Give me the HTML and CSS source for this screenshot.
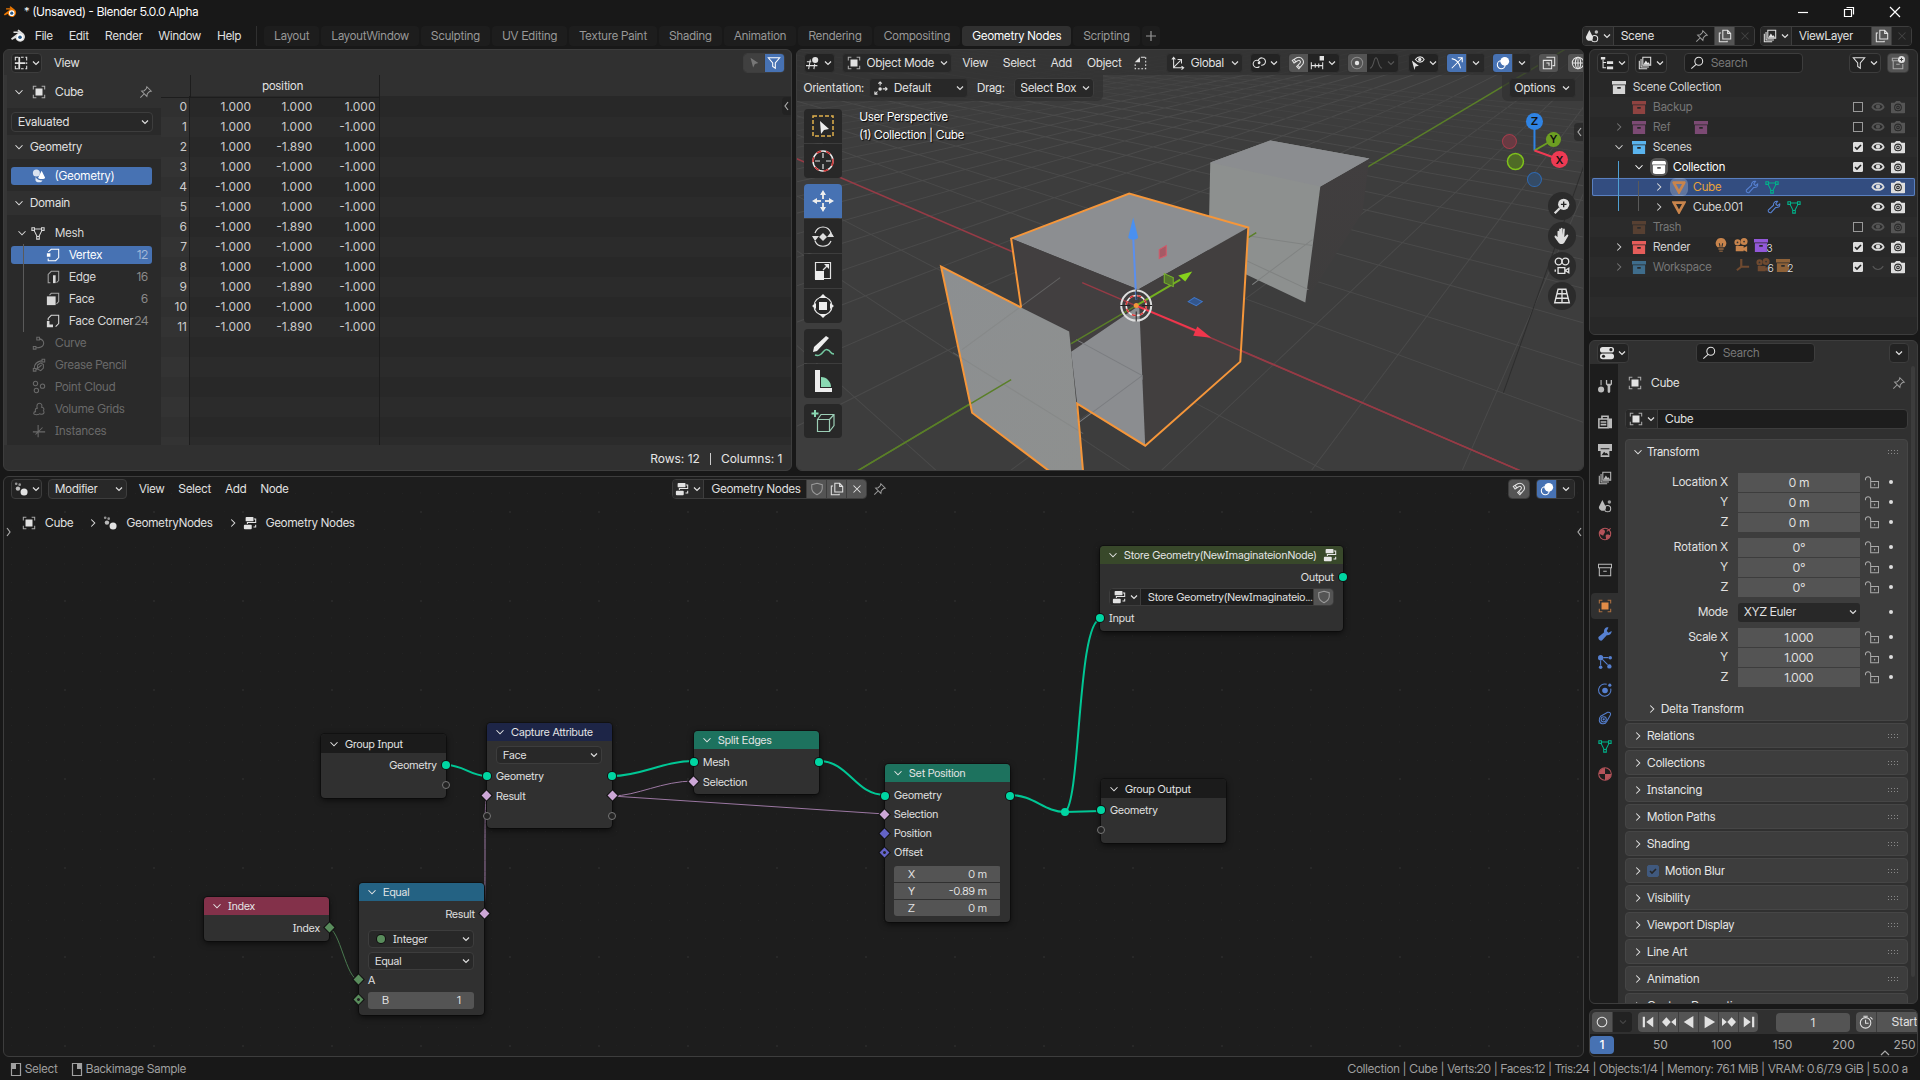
FILE: index.html
```html
<!DOCTYPE html>
<html lang="en">
<head>
<meta charset="utf-8">
<title>* (Unsaved) - Blender 5.0.0 Alpha</title>
<link rel="stylesheet" href="styles.css">
</head>
<body>
<svg class="sprite" aria-hidden="true">
  <symbol id="blender" viewBox="0 0 16 16"><path d="M1 10.500 8 5H3.500V3.600h5.200L7.400 2.400 8.600 1.400l5 4.100a4.800 4.800 0 1 1-8.100 4.500L2 12z" fill="currentColor"/><circle cx="10" cy="9.300" r="3.200" class="hole"/><circle cx="10" cy="9.300" r="1.800" class="pupil"/></symbol>
  <symbol id="sheet" viewBox="0 0 16 16"><path d="M1.500 5V1.500H5M8 1.500h3M14.500 5V1.500H13M1.500 11v3.500H5M8 14.500h3M14.500 11v3.500H13M14.500 7v2" class="l"/><path d="M5 1h2v14H5zM1 7h12v2H1z" fill="currentColor"/></symbol>
  <symbol id="down" viewBox="0 0 8 16"><path d="m1 6.500 3 3 3-3" class="l"/></symbol>
  <symbol id="open" viewBox="0 0 16 16"><path d="m4 6 4 4 4-4" class="l"/></symbol>
  <symbol id="closed" viewBox="0 0 16 16"><path d="m6 4 4 4-4 4" class="l"/></symbol>
  <symbol id="pin" viewBox="0 0 16 16"><path d="m9 2 5 5-2 .5L9.500 10l-.5 3-6-6 3-.5L8.500 4zM6 10l-4.500 4.500" class="l"/></symbol>
  <symbol id="object" viewBox="0 0 16 16"><path d="M1.500 5V1.500H5M11 1.500h3.500V5M1.500 11v3.500H5M11 14.500h3.500V11" class="l" opacity=".7"/><path d="M4 4h8v8H4z" fill="currentColor"/></symbol>
  <symbol id="cursor" viewBox="0 0 16 16"><path d="m4 2 9 6-4 1-2 4z" fill="currentColor"/></symbol>
  <symbol id="funnel" viewBox="0 0 16 16"><path d="M1.500 2h13l-5 6v6l-3-2V8z" class="l"/></symbol>
  <symbol id="geom" viewBox="0 0 16 16"><circle cx="5" cy="4.500" r="4" fill="currentColor" opacity=".8"/><path d="m11 2 4 8c0 2-8 2-8 0z" fill="currentColor"/><path d="M4 9v4c1 3 7 3 8 0-4 0-6-1-8-4z" fill="currentColor" opacity=".85"/></symbol>
  <symbol id="mesh" viewBox="0 0 16 16"><path d="M1 2h3v3H1zM12 2h3v3h-3zM6.500 12h3v3h-3zM4 3.500h8M3.500 5 7 12M12.500 5 9 12" class="l"/></symbol>
  <symbol id="vertex" viewBox="0 0 16 16"><path d="M3 4.500V4l3-2.500h8.500V11L11 14.500H2.500V12" class="l"/><path d="M1 6h4v4H1z" fill="currentColor"/></symbol>
  <symbol id="edge" viewBox="0 0 16 16"><path d="M5 14.500H2.500V5L6 1.500h8.500V12L12 14.500" class="l" opacity=".7"/><path d="M8 6h3v9H8z" fill="currentColor"/></symbol>
  <symbol id="face" viewBox="0 0 16 16"><path d="M4 3.500 6 1.500h8.500V11L12 13.500" class="l" opacity=".7"/><path d="M1 5h10v10H1z" fill="currentColor"/></symbol>
  <symbol id="corner" viewBox="0 0 16 16"><path d="M2.500 7V5L6 1.500h8.500V11L11 14.500" class="l"/><path d="M1 8h3v4h4v3H1z" fill="currentColor"/></symbol>
  <symbol id="curve" viewBox="0 0 16 16"><path d="M5.500 1.500h3v3h-3zM1.500 12h3v3h-3zM8.500 3C13 4 14 8 13 10c-1 2.500-4 3.500-8 3.500" class="l"/></symbol>
  <symbol id="gpencil" viewBox="0 0 16 16"><path d="M11.500 1.500h3v3h-3zM1.500 12h3v3h-3zM2.500 12c0-5 3-8 9-9M6.500 8 10 5.500l3 2v4L10 14.500l-4-2zM4.500 13.500 11 8" class="l"/></symbol>
  <symbol id="points" viewBox="0 0 16 16"><circle cx="4" cy="4" r="2.500" class="l"/><circle cx="12" cy="7" r="2.500" class="l"/><circle cx="5" cy="12" r="2.500" class="l"/></symbol>
  <symbol id="volume" viewBox="0 0 16 16"><path d="M6 7C5 4 6 1.500 8.500 1.500S12 4 11 6c3 0 3 3 2 4 2 2 0 4-2 4-1 0-2 0-2-1-1 2-7 2-7 0s1-2 2-2c-1-3 1-4 2-4z" class="l"/></symbol>
  <symbol id="empty" viewBox="0 0 16 16"><path d="M7 1v14M1 9h14M4 12l8-8" class="l"/></symbol>
  <symbol id="view3d" viewBox="0 0 16 16"><path d="M1 6.500h5M0 11h13M5 4 3 15M10 9 9 15" class="l"/><circle cx="10.500" cy="4.500" r="3.500" fill="currentColor"/></symbol>
  <symbol id="axes" viewBox="0 0 16 16"><path d="M3 14V2M1 4l2-2.500L5 4M3 13.500h11M12 11.500l2.500 2-2.500 2M3 13l8-8M7.500 4H12v4.500" class="l"/></symbol>
  <symbol id="axes2" viewBox="0 0 16 16"><path d="M7 5V1M5 3l2-2 2 2M10 9h5M13 7l2 2-2 2M4 12l-3 3M1 12v3h3" class="l"/><circle cx="7" cy="9" r="2" fill="currentColor"/></symbol>
  <symbol id="link" viewBox="0 0 16 16"><path d="M9.500 7.500a4.200 4.200 0 1 0-1 4.500M7 6a4.200 4.200 0 1 1 3.500 4.500" class="l"/><circle cx="8" cy="8" r="1.500" fill="currentColor"/></symbol>
  <symbol id="magnet" viewBox="0 0 16 16"><path d="M1.500 5 6.500 2c6-2.500 10.500 5 5.500 9L9 14.500l-2.500-2.500 3.500-3.500c2-2.500-.5-4.500-2.500-3L3.500 8zM7.500 10.500 10 13M3.500 3.500 5.500 7" class="l"/></symbol>
  <symbol id="snapinc" viewBox="0 0 16 16"><path d="M1.500 7v8M14.500 7v8M6 8.500v5M10 8.500v5M1 11h14" class="l"/><path d="M11 0h5v5h-5z" fill="currentColor"/></symbol>
  <symbol id="prop" viewBox="0 0 16 16"><circle cx="8" cy="8" r="6.500" class="l" opacity=".4"/><circle cx="8" cy="8" r="2.500" fill="currentColor"/></symbol>
  <symbol id="falloff" viewBox="0 0 16 16"><path d="M1 14c5-1 4-12 7-12s2 11 7 12" class="l"/></symbol>
  <symbol id="vis" viewBox="0 0 16 16"><path d="M5 4c3-4 8-4 10 0-2 4-7 4-10 0z" class="l"/><circle cx="10" cy="4" r="2" fill="currentColor"/><path d="m1 5 8 6-4 1-1 4z" fill="currentColor"/></symbol>
  <symbol id="gizmo" viewBox="0 0 16 16"><path d="M2 14 14 2M9 2h5v5M2 3c5 1 9 5 10 11" class="l"/></symbol>
  <symbol id="overlay" viewBox="0 0 16 16"><circle cx="10" cy="6" r="5" fill="currentColor"/><circle cx="6" cy="10" r="4.500" class="l"/></symbol>
  <symbol id="xray" viewBox="0 0 16 16"><path d="M5 1.500h9.500V11H12M1.500 5H11v9.500H1.500zM5 8h3v3" class="l"/></symbol>
  <symbol id="wire" viewBox="0 0 16 16"><circle cx="8" cy="8" r="6.500" class="l"/><ellipse cx="8" cy="8" rx="3" ry="6.500" class="l"/><path d="M1.500 8h13M8 1.500v13" class="l"/></symbol>
  <symbol id="selnew" viewBox="0 0 16 16"><path d="M14.500 1.500v13h-12V9" class="l" stroke-dasharray="2 2"/><path d="M8 1v6H2z" fill="currentColor"/><path d="M9 1.500h5" class="l"/></symbol>
  <symbol id="scene" viewBox="0 0 16 16"><path d="m5 1 4 8c1 6-8 6-8 0z" fill="currentColor"/><circle cx="11" cy="11" r="3.500" class="l"/><circle cx="13" cy="3.500" r="2" fill="currentColor" opacity=".8"/></symbol>
  <symbol id="copy" viewBox="0 0 16 16"><path d="M5.500 1.500H11L14.500 5v6.500h-9zM11 1.500V5h3.500M3.500 4.500h-2v10h9v-1" class="l"/></symbol>
  <symbol id="x" viewBox="0 0 16 16"><path d="m4 4 8 8M12 4l-8 8" class="l"/></symbol>
  <symbol id="layers" viewBox="0 0 16 16"><path d="M5.500 1.500h9v9h-9zM3.500 3.500v9h9M1.500 5.500v9h9" class="l"/><path d="m6 10 3-5 2 3 1-1 2 3z" fill="currentColor"/></symbol>
  <symbol id="tree" viewBox="0 0 16 16"><path d="M1 1h5v3H1zM8 6h7v3H8zM8 12h7v3H8z" fill="currentColor"/><path d="M3.500 4v9.500H7M3.500 7.500H7" class="l"/></symbol>
  <symbol id="search" viewBox="0 0 16 16"><circle cx="10" cy="6" r="4.500" class="l"/><path d="m7 9.500-5.500 5" class="l"/></symbol>
  <symbol id="newcol" viewBox="0 0 16 16"><path d="M8 2.500H1.500v3H10M2.500 6v8.500h11V9M6 9.500h4" class="l" opacity=".6"/><circle cx="12" cy="4" r="4" fill="currentColor"/><path d="M12 2v4M10 4h4" stroke="#444"/></symbol>
  <symbol id="coll" viewBox="0 0 16 16"><path d="M0 1h16v4H0zM1 6h14v10H1zm5 2v2h4V8z" fill="currentColor" fill-rule="evenodd"/></symbol>
  <symbol id="collout" viewBox="0 0 16 16"><path d="M.5 1.500h15v4H.5zM1.500 6v8.500h13V6M6 9.500h4" class="l"/></symbol>
  <symbol id="tri" viewBox="0 0 16 16"><path d="M2 3h12L8 14z" fill="none" stroke="currentColor" stroke-width="3"/></symbol>
  <symbol id="wrench" viewBox="0 0 16 16"><path d="M14.500 4.500 12 6.500l-2-2L12 1.500c-3-.5-5 2-4.500 4.500l-6 5.500c-.5 2 1 3.500 3 3l5.500-6c3 .5 5-1 4.500-4z" class="l"/></symbol>
  <symbol id="wrenchf" viewBox="0 0 16 16"><path d="M15.500 4.500 12 6.500l-2-2L12 .5C9-1 6 3 7 6L.5 11.500c-.5 2.500 1.500 4.500 4 4L10 9.500c3 .5 6-2 5.500-5z" fill="currentColor"/></symbol>
  <symbol id="eye" viewBox="0 0 16 16"><path d="M1.500 8c2.500-5.500 10.500-5.500 13 0-2.500 4.500-10.500 4.500-13 0z" fill="none" stroke="currentColor" stroke-width="2"/><circle cx="8" cy="7.500" r="2.500" fill="currentColor"/></symbol>
  <symbol id="lid" viewBox="0 0 16 16"><path d="M2 7c3 5 9 5 12 0" class="l"/></symbol>
  <symbol id="cam" viewBox="0 0 16 16"><path d="M1 3h3L6 1h4l2 2h3c1 0 1 0 1 1v10c0 1 0 1-1 1H1c-1 0-1 0-1-1V4c0-1 0-1 1-1z" fill="currentColor"/><circle cx="8" cy="8.500" r="3.800" fill="none" stroke="#2a2a2a"/><circle cx="8" cy="8.500" r="1.500" fill="none" stroke="#2a2a2a"/></symbol>
  <symbol id="bulb" viewBox="0 0 16 16"><path d="M8 0a6 6 0 0 0-4 10.500h8A6 6 0 0 0 8 0zM5 12h6v1H5zM6 14.500h4v1H6z" fill="currentColor"/><path d="M6 6l1 4M10 6 9 10" stroke="#333"/></symbol>
  <symbol id="movie" viewBox="0 0 16 16"><path d="M2 9h9v6H2zM11 11l4-2v7l-4-2z" fill="currentColor"/><circle cx="4" cy="5" r="3.500" fill="currentColor"/><circle cx="11.500" cy="4" r="4" fill="currentColor"/><circle cx="11.500" cy="4" r="1" fill="#333"/><circle cx="4" cy="5" r="1" fill="#333"/></symbol>
  <symbol id="axis3" viewBox="0 0 16 16"><path d="M6 1v9h9M6 10l-5 4" fill="none" stroke="currentColor" stroke-width="2.500"/></symbol>
  <symbol id="shield" viewBox="0 0 16 16"><path d="M8 1.500 14 3v4c0 4-3 6-6 7.500C5 13 2 11 2 7V3z" class="l"/></symbol>
  <symbol id="nodes" viewBox="0 0 16 16"><rect x="3" y="1" width="9" height="5" rx="1" fill="currentColor"/><rect x="1" y="10" width="9" height="5" rx="1" fill="currentColor"/><path d="M12.500 3.500h2V8M12 12.500h2.500V10M14 7.500H5V9" class="l"/></symbol>
  <symbol id="gnmod" viewBox="0 0 16 16"><circle cx="2.500" cy="2" r="1.500" fill="currentColor" opacity=".6"/><circle cx="6.500" cy="3" r="1.500" fill="currentColor" opacity=".6"/><circle cx="4.500" cy="7.500" r="2.500" fill="currentColor" opacity=".8"/><circle cx="11.500" cy="11.500" r="4" fill="currentColor"/></symbol>
  <symbol id="props" viewBox="0 0 16 16"><rect x="0" y="1" width="16" height="6.500" rx="3" fill="currentColor"/><rect x="0" y="8.500" width="16" height="6.500" rx="3" fill="currentColor"/><circle cx="12.500" cy="4.200" r="1.800" fill="#222"/><circle cx="4" cy="11.700" r="1.800" fill="#222"/></symbol>
  <symbol id="tool" viewBox="0 0 16 16"><path d="M3.500 1v6" class="l"/><circle cx="3.500" cy="12" r="3.500" fill="currentColor"/><path d="M9 1v5l2 2v6c0 2.500 3 2.500 3 0V8l2-2V1h-1.500v4.500h-4V1z" fill="currentColor"/></symbol>
  <symbol id="render" viewBox="0 0 16 16"><path d="M4.500 4V1.500h7V4M1 4.500h10.500v10H1zM3 8h6.500M3 11h6.500" fill="none" stroke="currentColor" stroke-width="1.800"/><path d="M12 4h4v11h-4z" fill="currentColor"/></symbol>
  <symbol id="output" viewBox="0 0 16 16"><path d="M0 1h16v8h-3V6H3v3H0zM3 7h10v9H3z" fill="currentColor"/><path d="m4 14 3-4 2 2 1-1 2 3z" fill="#222"/></symbol>
  <symbol id="world" viewBox="0 0 16 16"><circle cx="8" cy="8" r="6.500" class="l"/><path d="M2 4c3-3 6-1 6 1s-2 3-2 5l-4-2zM9 9c2-1 5 0 5 1s-2 4-5 4c1-2-1-3 0-5z" fill="currentColor"/><path d="M10 5l4.500-3.500" class="l"/></symbol>
  <symbol id="parts" viewBox="0 0 16 16"><circle cx="3" cy="3" r="3" fill="currentColor"/><path d="M6 3h6M3 6v6M5 5l6 6" class="l"/><circle cx="14" cy="3" r="2" fill="currentColor"/><circle cx="3" cy="14" r="2" fill="currentColor"/><circle cx="13" cy="13" r="2.500" fill="currentColor"/></symbol>
  <symbol id="phys" viewBox="0 0 16 16"><path d="M10 1.500a7 7 0 1 0 4.500 5" class="l"/><circle cx="8" cy="8.500" r="3.200" fill="currentColor"/><circle cx="13.500" cy="2.500" r="1.800" fill="currentColor"/></symbol>
  <symbol id="constr" viewBox="0 0 16 16"><path d="M3 6l8-4.500c3-.5 4 1.500 3 3.500l-4 7c-2 4-8 3-8.500-1C1.300 9 2 7 3 6z" class="l"/><circle cx="6.500" cy="9.500" r="3" class="l"/><circle cx="6.500" cy="9.500" r="1.300" fill="currentColor"/></symbol>
  <symbol id="mat" viewBox="0 0 16 16"><circle cx="8" cy="8" r="7.200" class="l"/><path d="M8 8V1A7 7 0 0 0 1 8zM8 8v7a7 7 0 0 0 7-7z" fill="currentColor"/></symbol>
  <symbol id="lock" viewBox="0 0 16 16"><path d="M6.500 7.500h9v7h-9zM6.500 7.500V5c0-4-6-4-6 0v1M11 10v2" class="l"/></symbol>
  <symbol id="clock" viewBox="0 0 16 16"><circle cx="7.500" cy="9" r="6" class="l"/><path d="M7.500 5.500v4H11M5 1.500h5M13 2.500l2.500 2.500" class="l"/></symbol>
  <symbol id="first" viewBox="0 0 16 16"><path d="M2 2h2.500v12H2zM14 2v12L6 8z" fill="currentColor"/></symbol>
  <symbol id="last" viewBox="0 0 16 16"><path d="M11.500 2H14v12h-2.500zM2 2v12l8-6z" fill="currentColor"/></symbol>
  <symbol id="prevkey" viewBox="0 0 16 16"><path d="m0 8 5-5.500L10 8l-5 5.500zM16 3.500v9L10.500 8z" fill="currentColor"/></symbol>
  <symbol id="nextkey" viewBox="0 0 16 16"><path d="m6 8 5-5.500L16 8l-5 5.500zM0 3.500v9L5.500 8z" fill="currentColor"/></symbol>
  <symbol id="back" viewBox="0 0 16 16"><path d="M13 1v14L2 8z" fill="currentColor"/></symbol>
  <symbol id="play" viewBox="0 0 16 16"><path d="M3 1v14l12-7z" fill="currentColor"/></symbol>
  <symbol id="ring" viewBox="0 0 16 16"><circle cx="8" cy="8" r="5.500" class="l"/></symbol>
  <symbol id="lmb" viewBox="0 0 12 16"><path d="M1.500 2.500h9v12h-9z" class="l"/><path d="M1 2h5v6H1z" fill="currentColor"/></symbol>
  <symbol id="rmb" viewBox="0 0 12 16"><path d="M1.500 2.500h9v12h-9z" class="l"/><path d="M6 2h5v6H6z" fill="currentColor"/></symbol>
</svg>

<header class="titlebar">
  <svg class="i logo"><use href="#blender"/></svg>
  <h1>* (Unsaved) - Blender 5.0.0 Alpha</h1>
  <div class="winctl">
    <button aria-label="Minimize"><svg viewBox="0 0 12 12"><path d="M1 6.500h10" class="l"/></svg></button>
    <button aria-label="Restore"><svg viewBox="0 0 12 12"><path d="M1.500 3.500h7v7h-7zM3.500 1.500h7v7" class="l"/></svg></button>
    <button aria-label="Close"><svg viewBox="0 0 12 12"><path d="m1 1 10 10M11 1 1 11" class="l"/></svg></button>
  </div>
</header>

<nav class="topbar">
  <button class="menu app" aria-label="Blender"><svg class="i"><use href="#blender"/></svg></button>
  <button class="menu">File</button><button class="menu">Edit</button><button class="menu">Render</button><button class="menu">Window</button><button class="menu">Help</button>
  <div class="tabs">
    <button>Layout</button><button>LayoutWindow</button><button>Sculpting</button><button>UV Editing</button><button>Texture Paint</button><button>Shading</button><button>Animation</button><button>Rendering</button><button>Compositing</button><button class="on">Geometry Nodes</button><button>Scripting</button><button class="plus" aria-label="Add workspace"><svg class="i"><path d="M7 2v10M2 7h10" class="l"/></svg></button>
  </div>
  <div class="group idsel scenesel">
    <button class="drop" aria-label="Browse scene"><svg class="i"><use href="#scene"/></svg><svg class="d"><use href="#down"/></svg></button>
    <input aria-label="Scene" value="Scene"><svg class="i dim"><use href="#pin"/></svg>
    <button class="ib" aria-label="New scene"><svg class="i"><use href="#copy"/></svg></button>
    <button class="ib off" aria-label="Delete scene"><svg class="i"><use href="#x"/></svg></button>
  </div>
  <div class="group idsel layersel">
    <button class="drop" aria-label="Browse layer"><svg class="i"><use href="#layers"/></svg><svg class="d"><use href="#down"/></svg></button>
    <input aria-label="View layer" value="ViewLayer">
    <button class="ib" aria-label="New layer"><svg class="i"><use href="#copy"/></svg></button>
    <button class="ib off" aria-label="Delete layer"><svg class="i"><use href="#x"/></svg></button>
  </div>
</nav>

<main class="work">
<div class="left">
  <div class="upper">
    <section class="area sheet">
      <div class="head">
        <button class="drop box" aria-label="Editor type"><svg class="i"><use href="#sheet"/></svg><svg class="d"><use href="#down"/></svg></button>
        <button class="menu">View</button>
        <div class="group push"><button class="ib faint" aria-label="Selected only"><svg class="i"><use href="#cursor"/></svg></button><button class="ib blue" aria-label="Filter"><svg class="i"><use href="#funnel"/></svg></button></div>
      </div>
      <div class="sheetbody">
        <aside class="side">
          <div class="sechead tall"><svg class="i"><use href="#open"/></svg><svg class="i"><use href="#object"/></svg><span>Cube</span><svg class="i pushi dim"><use href="#pin"/></svg></div>
          <div class="pad"><select class="sel" aria-label="Object state"><option>Evaluated</option></select></div>
          <div class="sechead"><svg class="i"><use href="#open"/></svg><span>Geometry</span></div>
          <div class="pad geo"><button class="pick on"><svg class="i"><use href="#geom"/></svg>(Geometry)</button></div>
          <div class="sechead"><svg class="i"><use href="#open"/></svg><span>Domain</span></div>
          <div class="domains">
            <div class="dom root"><svg class="i"><use href="#open"/></svg><svg class="i"><use href="#mesh"/></svg>Mesh</div>
            <div class="kids">
              <button class="dom on"><svg class="i"><use href="#vertex"/></svg>Vertex<em>12</em></button>
              <button class="dom"><svg class="i"><use href="#edge"/></svg>Edge<em>16</em></button>
              <button class="dom"><svg class="i"><use href="#face"/></svg>Face<em>6</em></button>
              <button class="dom"><svg class="i"><use href="#corner"/></svg>Face Corner<em>24</em></button>
            </div>
            <button class="dom gone"><svg class="i"><use href="#curve"/></svg>Curve</button>
            <button class="dom gone"><svg class="i"><use href="#gpencil"/></svg>Grease Pencil</button>
            <button class="dom gone"><svg class="i"><use href="#points"/></svg>Point Cloud</button>
            <button class="dom gone"><svg class="i"><use href="#volume"/></svg>Volume Grids</button>
            <button class="dom gone"><svg class="i"><use href="#empty"/></svg>Instances</button>
          </div>
        </aside>
        <div class="grid">
          <table>
            <thead><tr><th></th><th colspan="3">position</th></tr></thead>
            <tbody>
              <tr><th>0</th><td>1.000</td><td>1.000</td><td>1.000</td></tr>
              <tr><th>1</th><td>1.000</td><td>1.000</td><td>-1.000</td></tr>
              <tr><th>2</th><td>1.000</td><td>-1.890</td><td>1.000</td></tr>
              <tr><th>3</th><td>1.000</td><td>-1.000</td><td>-1.000</td></tr>
              <tr><th>4</th><td>-1.000</td><td>1.000</td><td>1.000</td></tr>
              <tr><th>5</th><td>-1.000</td><td>1.000</td><td>-1.000</td></tr>
              <tr><th>6</th><td>-1.000</td><td>-1.890</td><td>1.000</td></tr>
              <tr><th>7</th><td>-1.000</td><td>-1.000</td><td>-1.000</td></tr>
              <tr><th>8</th><td>1.000</td><td>-1.000</td><td>1.000</td></tr>
              <tr><th>9</th><td>1.000</td><td>-1.890</td><td>-1.000</td></tr>
              <tr><th>10</th><td>-1.000</td><td>-1.000</td><td>1.000</td></tr>
              <tr><th>11</th><td>-1.000</td><td>-1.890</td><td>-1.000</td></tr>
            </tbody>
          </table>
          <button class="flap" aria-label="Show sidebar"><svg viewBox="0 0 8 16"><path d="M6 4 3 8l3 4" class="l"/></svg></button>
        </div>
      </div>
      <footer class="foot"><span>Rows: 12</span><i></i><span>Columns: 1</span></footer>
    </section>

    <section class="area view">
      <svg class="stage" viewBox="796 49 788 423" preserveAspectRatio="xMidYMid slice">
        <defs>
          <linearGradient id="fade" x1="0" y1="0" x2="0" y2="1"><stop offset="0" stop-color="#413e3f"/><stop offset="1" stop-color="#3e3d3d"/></linearGradient>
          <linearGradient id="lit" x1="0" y1="0" x2="1" y2="1"><stop offset="0" stop-color="#8c8f91"/><stop offset="1" stop-color="#8e908f"/></linearGradient>
        </defs>
        <rect x="700" y="0" width="1000" height="600" fill="#3d3d3d"/>
        <path fill="none" stroke="#4a4a4a" d="M400-10 1600 1066M400-10 1600 780M400-10 1600 614M400-10 1600 429M400-10 1600 372M400-10 1600 328M400-10 1600 293M400-10 1600 264M400-10 1600 241M400-10 1600 221M400-10 1600 204M400-10 1600 189M400-10 1600 176M1674-14 780 435M1674-14 780 375M1674-14 780 329M1674-14 780 292M1674-14 780 263M1674-14 780 239M1674-14 780 218M1674-14 780 201M1674-14 780 186M1674-14 780 173M1674-14 780 639M1674-14 780 831M1674-14 780 1180M1674-14 1449 500"/>
        <path fill="none" stroke="#444" d="M400-10 1600 165M400-10 1600 155M400-10 1600 146M400-10 1600 138M400-10 1600 131M400-10 1600 124M400-10 1600 118M400-10 1600 112M1674-14 780 162M1674-14 780 151M1674-14 780 142M1674-14 780 134M1674-14 780 127M1674-14 780 121M1674-14 780 115M1674-14 780 109"/>
        <path d="M795 158.500 1522 472" stroke="#963b46" stroke-width="1.500"/>
        <path d="M1566 49 856 472" stroke="#5a7f28" stroke-width="1.500"/>
        <path d="M1503 393 1583 167" stroke="#2e2e2e"/>
        <path d="M1320 187 1369 159 1362 213 1305 303z" fill="url(#fade)"/>
        <path d="M1270 141 1369 159 1320 187 1305 303 1208 257 1210 163z" fill="#8d908f"/>
        <path d="M1270 141 1369 159 1320 187 1210 163z" fill="#8b8d90"/>
        <path d="M1246 261 1308 290M1246 236 1312 246M1252 285 1312 240" stroke="#808382"/>
        <path d="M1129 194 1248 228 1138 290 1011 239z" fill="#8c8e91"/>
        <path d="M1011 239 1138 290 1139 320 1071 352 1069 332 1021 308z" fill="#423f40"/>
        <path d="M1138 290 1248 228 1240 362 1145 446z" fill="#423f3f"/>
        <path d="M1139 306 1145 446 1077 404 1071 352z" fill="#8b8d90"/>
        <path d="M1076 340 1142 376 1142 380M1077 424 1142 376" stroke="#7b7d80" fill="none"/>
        <path d="M941 267 1021 308 1069 332 1083 472H1050L972 413z" fill="url(#lit)"/>
        <path d="M953 353 1083 434M962 350 1060 278" stroke="#818382" opacity=".5"/>
        <path d="M856 472 1011 380M1071 344 1136 306M1248 238 1256 233" stroke="#5a7f28" stroke-width="1.500"/>
        <path d="M1082 283 1522 472" stroke="#963b46" stroke-width="1.500"/>
        <path d="M1021 308 1011 239 1129 194 1248 228 1240 362 1145 446 1077 404 1083 473M1050 472 972 413 941 267 1021 308" fill="none" stroke="#f5963a" stroke-width="2"/>
        <path d="M1136 300 1133 238" stroke="#5a8fee" stroke-width="2"/><path d="m1133 218 5 20c-2 3-8 3-10 0z" fill="#4a90f0"/>
        <path d="M1136 306 1180 280" stroke="#74b020" stroke-width="2"/><path d="m1192 272-7 10-7-6z" fill="#86d01c"/>
        <path d="M1136 306 1196 331" stroke="#f0364c" stroke-width="2"/><path d="m1211 338-18-2 4-9z" fill="#f0364c"/>
        <path d="M1159 250 1166 246V256L1159 259z" fill="#a65a65" stroke="#d25a6a"/>
        <path d="M1164 274 1173 278V287L1164 283z" fill="#54752c" stroke="#7ab82a"/>
        <path d="M1188 302 1194 298 1202 302 1196 306z" fill="#33568d" stroke="#3f76c8"/>
        <circle cx="1136" cy="306" r="15" fill="none" stroke="#ddd" stroke-width="2"/>
        <circle cx="1136" cy="306" r="10" fill="none" stroke="#e8e8e8" stroke-width="1.500"/>
        <circle cx="1136" cy="306" r="10" fill="none" stroke="#d33" stroke-width="1.500" stroke-dasharray="4 4"/>
        <path d="M1136 290v10M1136 312v10M1120 306h10M1142 306h10" stroke="#222"/>
        <circle cx="1136" cy="306" r="2.500" fill="#f5963a"/>
        <g class="axisgizmo">
          <path d="M1534 151V122" stroke="#2f83e3" stroke-width="2"/><path d="M1534 151 1553 140" stroke="#6d9f22" stroke-width="2"/><path d="M1534 151 1559 160" stroke="#ee3a53" stroke-width="2"/>
          <circle cx="1509" cy="142" r="7" fill="#683a42" stroke="#a23c4b"/><circle cx="1515" cy="162" r="8" fill="#4f6b26" stroke="#7fc11c" stroke-width="1.500"/><circle cx="1534" cy="180" r="7" fill="#344b66" stroke="#2f69b0"/>
          <circle cx="1534" cy="122" r="8.500" fill="#2f83e3"/><circle cx="1553" cy="140" r="7.500" fill="#6d9f22"/><circle cx="1559" cy="160" r="8.500" fill="#ee3a53"/>
          <text x="1534" y="126">Z</text><text x="1553" y="144">Y</text><text x="1559" y="164">X</text>
        </g>
      </svg>
      <div class="head glass">
        <button class="drop box" aria-label="Editor type"><svg class="i"><use href="#view3d"/></svg><svg class="d"><use href="#down"/></svg></button>
        <label class="isel mode"><svg class="i"><use href="#object"/></svg><select aria-label="Mode"><option>Object Mode</option></select></label>
        <div class="menus"><button class="menu">View</button><button class="menu">Select</button><button class="menu">Add</button><button class="menu">Object</button></div>
        <svg class="i selnew"><use href="#selnew"/></svg>
        <label class="isel orient"><svg class="i"><use href="#axes"/></svg><select aria-label="Orientation"><option>Global</option></select></label>
        <button class="drop box" aria-label="Pivot"><svg class="i"><use href="#link"/></svg><svg class="d"><use href="#down"/></svg></button>
        <div class="group"><button class="ib" aria-label="Snap"><svg class="i"><use href="#magnet"/></svg></button><button class="drop" aria-label="Snap to"><svg class="i"><use href="#snapinc"/></svg><svg class="d"><use href="#down"/></svg></button></div>
        <div class="group"><button class="ib" aria-label="Proportional"><svg class="i"><use href="#prop"/></svg></button><button class="drop off" aria-label="Falloff"><svg class="i"><use href="#falloff"/></svg><svg class="d"><use href="#down"/></svg></button></div>
        <button class="drop box push" aria-label="Visibility"><svg class="i"><use href="#vis"/></svg><svg class="d"><use href="#down"/></svg></button>
        <div class="group"><button class="ib blue" aria-label="Gizmos"><svg class="i"><use href="#gizmo"/></svg></button><button class="ib dark" aria-label="Gizmo options"><svg class="d"><use href="#down"/></svg></button></div>
        <div class="group"><button class="ib blue" aria-label="Overlays"><svg class="i"><use href="#overlay"/></svg></button><button class="ib dark" aria-label="Overlay options"><svg class="d"><use href="#down"/></svg></button></div>
        <div class="group"><button class="ib" aria-label="X-Ray"><svg class="i"><use href="#xray"/></svg></button></div>
        <div class="group cut"><button class="ib" aria-label="Wireframe"><svg class="i"><use href="#wire"/></svg></button></div>
      </div>
      <div class="toolset">
        <div class="ts">
          <span>Orientation:</span>
          <label class="isel default"><svg class="i"><use href="#axes2"/></svg><select aria-label="Tool orientation"><option>Default</option></select></label>
          <span>Drag:</span>
          <select class="sel drag" aria-label="Drag action"><option>Select Box</option></select>
        </div>
        <div class="ts opt"><button class="drop box options">Options<svg class="d"><use href="#down"/></svg></button></div>
      </div>
      <div class="viewbody">
        <div class="tools">
          <div><button aria-label="Select box"><svg viewBox="0 0 32 32"><path d="M6 6h20v20H6z" fill="none" stroke="#e0b04c" stroke-dasharray="4 2" stroke-width="1.500"/><path d="m13 11 9 8-5 1-3 4z" fill="#eee"/></svg></button><button aria-label="Cursor"><svg viewBox="0 0 32 32"><circle cx="16" cy="16" r="10" fill="none" stroke="#eee" stroke-width="1.500"/><circle cx="16" cy="16" r="10" fill="none" stroke="#c33" stroke-width="1.500" stroke-dasharray="5 5"/><path d="M16 8v5M16 19v5M8 16h5M19 16h5" class="l"/></svg></button></div>
          <div><button class="on" aria-label="Move"><svg viewBox="0 0 32 32"><path d="m16 5 3 5h-6zM16 27l3-5h-6zM5 16l5-3v6zM27 16l-5-3v6z" fill="#eee"/><path d="M16 10v4M16 18v4M10 16h4M18 16h4" class="l" stroke-width="2"/></svg></button><button aria-label="Rotate"><svg viewBox="0 0 32 32"><path d="M8 13c3-8 13-8 16 0M8 21c3 7 13 7 16 0" class="l"/><path d="m16 13 4 4-4 4-4-4zM5 16h7l-4 5zM27 17h-7l4-5z" fill="#ddd"/></svg></button><button aria-label="Scale"><svg viewBox="0 0 32 32"><path d="M8.500 7.500h15v16h-15z" class="l"/><path d="M8 16h9v9H8zM17 9h5v5z" fill="#eee"/><path d="m16 15 5-5" class="l"/></svg></button><button aria-label="Transform"><svg viewBox="0 0 32 32"><circle cx="16" cy="16" r="9" class="l"/><path d="M12 12h8v8h-8zM16 4l4 4h-8zM16 28l4-4h-8zM5 16l4-3v6zM27 16l-4-3v6z" fill="#eee"/></svg></button></div>
          <div><button aria-label="Annotate"><svg viewBox="0 0 32 32"><path d="m6 22 1-5L19 6l3 2-12 13z" fill="#eee"/><path d="M8 25c8 3 8-8 13-5 3 1 2 4 6 4" fill="none" stroke="#73c7a0" stroke-width="1.500"/></svg></button><button aria-label="Measure"><svg viewBox="0 0 32 32"><path d="M8 5h5v18h12v4H8z" fill="#eee"/><path d="M14 12c6 0 10 5 10 10H14z" fill="#8ad9b3"/></svg></button></div>
          <div><button aria-label="Add cube"><svg viewBox="0 0 32 32"><path d="M10.500 14.500h12v12h-12zM10.500 14.500 14 9.500h13v11l-4.500 6M22.500 14.500 27 9.500" fill="none" stroke="#9bcdb5"/><path d="M8 5v7M4.500 8.500h7" stroke="#8ad9b3" stroke-width="2"/></svg></button></div>
        </div>
        <div class="info"><div>User Perspective</div><div>(1) Collection | Cube</div></div>
        <div class="nav">
          <button aria-label="Zoom"><svg viewBox="0 0 16 16"><circle cx="9.500" cy="6.500" r="5" fill="#ddd"/><path d="M9.500 4v5M7 6.500h5" stroke="#222"/><path d="m6 10-4.500 4.500" stroke="#ddd" stroke-width="2"/></svg></button>
          <button aria-label="Pan"><svg viewBox="0 0 16 16"><path d="M4 9V4c0-1 1.500-1 1.500 0v3V2C5.500 1 7 1 7 2v5V1.500c0-1 1.500-1 1.500 0V7l.5-5c0-1 1.500-1 1.500 0l-.5 7 2-2c1-1 2 0 1.500 1L10 14c-1 1.500-4 1.500-5 0L1.500 9C1 8 2 7 3 8z" fill="#ddd"/></svg></button>
          <button aria-label="Camera"><svg viewBox="0 0 16 16"><circle cx="5" cy="4" r="3" class="l"/><circle cx="11" cy="4" r="3" class="l"/><path d="M4.500 9.500h6v5h-6zM11 12l3-2v4zM2 11v2" class="l"/></svg></button>
          <button aria-label="Perspective"><svg viewBox="0 0 16 16"><path d="M4.500 2h7l3 12h-13zM8 2v12M3.500 6h9M2.500 10h11" class="l"/></svg></button>
        </div>
        <button class="flap" aria-label="Show sidebar"><svg viewBox="0 0 8 16"><path d="M6 4 3 8l3 4" class="l"/></svg></button>
      </div>
    </section>
  </div>

  <section class="area nodes">
    <div class="head">
      <button class="drop box" aria-label="Editor type"><svg class="i"><use href="#gnmod"/></svg><svg class="d"><use href="#down"/></svg></button>
      <select class="sel modifier" aria-label="Node tree type"><option>Modifier</option></select>
      <div class="menus"><button class="menu">View</button><button class="menu">Select</button><button class="menu">Add</button><button class="menu">Node</button></div>
      <div class="group idsel treesel">
        <button class="drop" aria-label="Browse node tree"><svg class="i"><use href="#nodes"/></svg><svg class="d"><use href="#down"/></svg></button>
        <input aria-label="Node tree" value="Geometry Nodes">
        <button class="ib" aria-label="Fake user"><svg class="i dim"><use href="#shield"/></svg></button><button class="ib" aria-label="Duplicate"><svg class="i"><use href="#copy"/></svg></button><button class="ib" aria-label="Unlink"><svg class="i"><use href="#x"/></svg></button>
      </div>
      <svg class="i dim"><use href="#pin"/></svg>
      <div class="group push"><button class="ib" aria-label="Snap"><svg class="i"><use href="#magnet"/></svg></button></div>
      <div class="group mini"><button class="ib blue" aria-label="Overlays"><svg class="i"><use href="#overlay"/></svg></button><button class="ib dark" aria-label="Overlay options"><svg class="d"><use href="#down"/></svg></button></div>
    </div>
    <div class="crumbs"><svg class="i"><use href="#object"/></svg><span>Cube</span><svg class="i sep"><use href="#closed"/></svg><svg class="i"><use href="#gnmod"/></svg><span>GeometryNodes</span><svg class="i sep"><use href="#closed"/></svg><svg class="i"><use href="#nodes"/></svg><span>Geometry Nodes</span></div>
    <div class="canvas">
      <svg class="wires">
        <defs><pattern id="dots" width="89" height="89" patternUnits="userSpaceOnUse" x="60" y="34"><circle cx="1" cy="1" r="1" fill="#2b2b2b"/><path d="M18 0h1M36 0h1M53 0h1M71 0h1M0 18h1M0 36h1M0 53h1M0 71h1M18 18.500h1M36 18.500h1M53 18.500h1M71 18.500h1M18 36.500h1M36 36.500h1M53 36.500h1M71 36.500h1M18 53.500h1M36 53.500h1M53 53.500h1M71 53.500h1M18 71.500h1M36 71.500h1M53 71.500h1M71 71.500h1" stroke="#232323"/></pattern></defs>
        <rect width="100%" height="100%" fill="url(#dots)"/>
        <g transform="translate(-4 -478)" fill="none">
          <g stroke="#00c795" stroke-width="2"><path d="M446 766c18 0 24 11 41 11"/><path d="M612 777c30 0 50-15 82-15"/><path d="M819 762c30 0 36 34 66 34"/><path d="M1010 796c24 0 34 17 55 17"/><path d="M1065 813c16-10 12-193 36-193"/><path d="M1065 813 1101 812"/></g>
          <g stroke="#9c78a3"><path d="M612 797c25 0 50-15 82-15"/><path d="M612 797 885 815"/><path d="M487 797c-4 0 0 118-4 118"/></g>
          <path d="M328 929c12 0 18 52 31 52" stroke="#4a7a50"/>
          <circle cx="1065" cy="813" r="4" fill="#00d6a3"/>
        </g>
      </svg>

      <article class="node store" style="left:1096px;top:69px">
        <h2 class="olive"><svg class="i"><use href="#open"/></svg>Store Geometry(NewImaginateionNode)<svg class="i pushi"><use href="#nodes"/></svg></h2>
        <div class="row out"><b class="so geo"></b>Output</div>
        <div class="group idsel"><button class="drop" aria-label="Browse group"><svg class="i"><use href="#nodes"/></svg><svg class="d"><use href="#down"/></svg></button><input aria-label="Node group" value="Store Geometry(NewImaginateio..."><button class="ib" aria-label="Fake user"><svg class="i dim"><use href="#shield"/></svg></button></div>
        <div class="row"><b class="so geo"></b>Input</div>
      </article>

      <article class="node gin" style="left:317px;top:257px">
        <h2 class="black"><svg class="i"><use href="#open"/></svg>Group Input</h2>
        <div class="row out"><b class="so geo"></b>Geometry</div>
        <div class="row out"><b class="so none"></b></div>
      </article>

      <article class="node cap" style="left:483px;top:246px">
        <h2 class="navy"><svg class="i"><use href="#open"/></svg>Capture Attribute</h2>
        <select class="sel" aria-label="Domain"><option>Face</option></select>
        <div class="row"><b class="so geo"></b><b class="so geo r"></b>Geometry</div>
        <div class="row"><b class="so bool"></b><b class="so bool r"></b>Result</div>
        <div class="row"><b class="so none"></b><b class="so none r"></b></div>
      </article>

      <article class="node split" style="left:690px;top:254px">
        <h2 class="green"><svg class="i"><use href="#open"/></svg>Split Edges</h2>
        <div class="row"><b class="so geo"></b><b class="so geo r"></b>Mesh</div>
        <div class="row"><b class="so bool"></b>Selection</div>
      </article>

      <article class="node index" style="left:200px;top:420px">
        <h2 class="red"><svg class="i"><use href="#open"/></svg>Index</h2>
        <div class="row out"><b class="so int"></b>Index</div>
      </article>

      <article class="node equal" style="left:355px;top:406px">
        <h2 class="teal"><svg class="i"><use href="#open"/></svg>Equal</h2>
        <div class="row out"><b class="so bool"></b>Result</div>
        <label class="isel"><b class="dot"></b><select aria-label="Data type"><option>Integer</option></select></label>
        <select class="sel" aria-label="Operation"><option>Equal</option></select>
        <div class="row"><b class="so int"></b>A</div>
        <label class="row val"><b class="so int open"></b><span>B</span><input value="1"></label>
      </article>

      <article class="node setpos" style="left:881px;top:287px">
        <h2 class="green"><svg class="i"><use href="#open"/></svg>Set Position</h2>
        <div class="row"><b class="so geo"></b><b class="so geo r"></b>Geometry</div>
        <div class="row"><b class="so bool"></b>Selection</div>
        <div class="row"><b class="so vec"></b>Position</div>
        <div class="row"><b class="so vec open"></b>Offset</div>
        <div class="vector"><label class="val"><span>X</span><input value="0 m"></label><label class="val"><span>Y</span><input value="-0.89 m"></label><label class="val"><span>Z</span><input value="0 m"></label></div>
      </article>

      <article class="node gout" style="left:1097px;top:302px">
        <h2 class="black"><svg class="i"><use href="#open"/></svg>Group Output</h2>
        <div class="row"><b class="so geo"></b>Geometry</div>
        <div class="row"><b class="so none"></b></div>
      </article>
      <button class="flap" aria-label="Show sidebar"><svg viewBox="0 0 8 16"><path d="M6 4 3 8l3 4" class="l"/></svg></button>
      <button class="flap start" aria-label="Show toolbar"><svg viewBox="0 0 8 16"><path d="m2 4 3 4-3 4" class="l"/></svg></button>
    </div>
  </section>
</div>

<div class="right">
  <section class="area outliner">
    <div class="head">
      <button class="drop box" aria-label="Editor type"><svg class="i"><use href="#tree"/></svg><svg class="d"><use href="#down"/></svg></button>
      <button class="drop box" aria-label="Display mode"><svg class="i"><use href="#layers"/></svg><svg class="d"><use href="#down"/></svg></button>
      <label class="search"><svg class="i"><use href="#search"/></svg><input placeholder="Search" aria-label="Search outliner"></label>
      <button class="drop box" aria-label="Filter"><svg class="i"><use href="#funnel"/></svg><svg class="d"><use href="#down"/></svg></button>
      <div class="group"><button class="ib" aria-label="New collection"><svg class="i"><use href="#newcol"/></svg></button></div>
    </div>
    <ul class="tree">
      <li class="l0"><svg class="i"><use href="#coll"/></svg><span>Scene Collection</span></li>
      <li class="l1 mute"><svg class="i"></svg><svg class="i c-red"><use href="#coll"/></svg><span>Backup</span><div class="tg"><input type="checkbox" aria-label="Backup enabled"><svg class="i faded"><use href="#eye"/></svg><svg class="i faded"><use href="#cam"/></svg></div></li>
      <li class="l1 mute"><svg class="i"><use href="#closed"/></svg><svg class="i c-pink"><use href="#coll"/></svg><span>Ref</span><div class="ex"><svg class="i c-pink"><use href="#coll"/></svg></div><div class="tg"><input type="checkbox" aria-label="Ref enabled"><svg class="i faded"><use href="#eye"/></svg><svg class="i faded"><use href="#cam"/></svg></div></li>
      <li class="l1"><svg class="i"><use href="#open"/></svg><svg class="i c-blue"><use href="#coll"/></svg><span>Scenes</span><div class="tg"><input type="checkbox" checked aria-label="Scenes enabled"><svg class="i"><use href="#eye"/></svg><svg class="i"><use href="#cam"/></svg></div></li>
      <li class="l2 strong"><svg class="i"><use href="#open"/></svg><svg class="i halo"><use href="#coll"/></svg><span>Collection</span><div class="tg"><input type="checkbox" checked aria-label="Collection enabled"><svg class="i"><use href="#eye"/></svg><svg class="i"><use href="#cam"/></svg></div></li>
      <li class="l3 picked"><svg class="i"><use href="#closed"/></svg><svg class="i c-orange halo"><use href="#tri"/></svg><span>Cube</span><div class="ex"><svg class="i c-wrench"><use href="#wrench"/></svg><svg class="i c-mesh"><use href="#mesh"/></svg></div><div class="tg"><svg class="i"><use href="#eye"/></svg><svg class="i"><use href="#cam"/></svg></div></li>
      <li class="l3"><svg class="i"><use href="#closed"/></svg><svg class="i c-orange"><use href="#tri"/></svg><span>Cube.001</span><div class="ex"><svg class="i c-wrench"><use href="#wrench"/></svg><svg class="i c-mesh"><use href="#mesh"/></svg></div><div class="tg"><svg class="i"><use href="#eye"/></svg><svg class="i"><use href="#cam"/></svg></div></li>
      <li class="l1 mute"><svg class="i"></svg><svg class="i c-brown"><use href="#coll"/></svg><span>Trash</span><div class="tg"><input type="checkbox" aria-label="Trash enabled"><svg class="i faded"><use href="#eye"/></svg><svg class="i faded"><use href="#cam"/></svg></div></li>
      <li class="l1"><svg class="i"><use href="#closed"/></svg><svg class="i c-coral"><use href="#coll"/></svg><span>Render</span><div class="ex"><svg class="i c-orange"><use href="#bulb"/></svg><svg class="i c-orange"><use href="#movie"/></svg><svg class="i c-purple"><use href="#coll"/></svg><sub>3</sub></div><div class="tg"><input type="checkbox" checked aria-label="Render enabled"><svg class="i"><use href="#eye"/></svg><svg class="i"><use href="#cam"/></svg></div></li>
      <li class="l1 mute"><svg class="i"><use href="#closed"/></svg><svg class="i c-steel"><use href="#coll"/></svg><span>Workspace</span><div class="ex"><svg class="i c-tan"><use href="#axis3"/></svg><svg class="i c-tan"><use href="#movie"/></svg><sub>6</sub><svg class="i c-amber"><use href="#coll"/></svg><sub>2</sub></div><div class="tg"><input type="checkbox" checked aria-label="Workspace enabled"><svg class="i faded"><use href="#lid"/></svg><svg class="i"><use href="#cam"/></svg></div></li>
    </ul>
  </section>

  <section class="area props">
    <div class="head">
      <button class="drop box" aria-label="Editor type"><svg class="i"><use href="#props"/></svg><svg class="d"><use href="#down"/></svg></button>
      <label class="search"><svg class="i"><use href="#search"/></svg><input placeholder="Search" aria-label="Search properties"></label>
      <button class="drop box small" aria-label="Options"><svg class="d"><use href="#down"/></svg></button>
    </div>
    <div class="propbody">
      <nav class="ptabs">
        <div><button aria-label="Tool"><svg class="i"><use href="#tool"/></svg></button></div>
        <div><button aria-label="Render"><svg class="i"><use href="#render"/></svg></button><button aria-label="Output"><svg class="i"><use href="#output"/></svg></button><button aria-label="View Layer"><svg class="i"><use href="#layers"/></svg></button><button aria-label="Scene"><svg class="i"><use href="#scene"/></svg></button><button aria-label="World" class="c-world"><svg class="i"><use href="#world"/></svg></button></div>
        <div><button aria-label="Collection"><svg class="i"><use href="#collout"/></svg></button></div>
        <div><button aria-label="Object" class="on"><svg class="i"><use href="#object"/></svg></button><button aria-label="Modifiers" class="c-mod"><svg class="i"><use href="#wrenchf"/></svg></button><button aria-label="Particles" class="c-mod"><svg class="i"><use href="#parts"/></svg></button><button aria-label="Physics" class="c-mod"><svg class="i"><use href="#phys"/></svg></button><button aria-label="Constraints" class="c-mod"><svg class="i"><use href="#constr"/></svg></button><button aria-label="Data" class="c-mesh"><svg class="i"><use href="#mesh"/></svg></button><button aria-label="Material" class="c-world"><svg class="i"><use href="#mat"/></svg></button></div>
      </nav>
      <div class="pcontent">
        <div class="context"><svg class="i"><use href="#object"/></svg><span>Cube</span><svg class="i pushi dim"><use href="#pin"/></svg></div>
        <div class="group idsel"><button class="drop" aria-label="Browse object"><svg class="i"><use href="#object"/></svg><svg class="d"><use href="#down"/></svg></button><input aria-label="Object name" value="Cube"></div>
        <div class="panel transform">
          <h3><svg class="i"><use href="#open"/></svg>Transform<i class="grip"></i></h3>
          <div class="fields">
            <label><span>Location X</span><input value="0 m"><svg class="i"><use href="#lock"/></svg><i></i></label>
            <label><span>Y</span><input value="0 m"><svg class="i"><use href="#lock"/></svg><i></i></label>
            <label><span>Z</span><input value="0 m"><svg class="i"><use href="#lock"/></svg><i></i></label>
          </div>
          <div class="fields">
            <label><span>Rotation X</span><input value="0°"><svg class="i"><use href="#lock"/></svg><i></i></label>
            <label><span>Y</span><input value="0°"><svg class="i"><use href="#lock"/></svg><i></i></label>
            <label><span>Z</span><input value="0°"><svg class="i"><use href="#lock"/></svg><i></i></label>
          </div>
          <div class="fields">
            <label><span>Mode</span><select class="sel"><option>XYZ Euler</option></select><svg class="i"></svg><i></i></label>
          </div>
          <div class="fields">
            <label><span>Scale X</span><input value="1.000"><svg class="i"><use href="#lock"/></svg><i></i></label>
            <label><span>Y</span><input value="1.000"><svg class="i"><use href="#lock"/></svg><i></i></label>
            <label><span>Z</span><input value="1.000"><svg class="i"><use href="#lock"/></svg><i></i></label>
          </div>
          <h4><svg class="i"><use href="#closed"/></svg>Delta Transform</h4>
        </div>
        <div class="panel"><h3><svg class="i"><use href="#closed"/></svg>Relations<i class="grip"></i></h3></div>
        <div class="panel"><h3><svg class="i"><use href="#closed"/></svg>Collections<i class="grip"></i></h3></div>
        <div class="panel"><h3><svg class="i"><use href="#closed"/></svg>Instancing<i class="grip"></i></h3></div>
        <div class="panel"><h3><svg class="i"><use href="#closed"/></svg>Motion Paths<i class="grip"></i></h3></div>
        <div class="panel"><h3><svg class="i"><use href="#closed"/></svg>Shading<i class="grip"></i></h3></div>
        <div class="panel"><h3><svg class="i"><use href="#closed"/></svg><input type="checkbox" id="mblur" checked><label for="mblur">Motion Blur</label><i class="grip"></i></h3></div>
        <div class="panel"><h3><svg class="i"><use href="#closed"/></svg>Visibility<i class="grip"></i></h3></div>
        <div class="panel"><h3><svg class="i"><use href="#closed"/></svg>Viewport Display<i class="grip"></i></h3></div>
        <div class="panel"><h3><svg class="i"><use href="#closed"/></svg>Line Art<i class="grip"></i></h3></div>
        <div class="panel"><h3><svg class="i"><use href="#closed"/></svg>Animation<i class="grip"></i></h3></div>
        <div class="panel"><h3><svg class="i"><use href="#closed"/></svg>Custom Properties<i class="grip"></i></h3></div>
      </div>
      <div class="bar"></div>
    </div>
  </section>

  <section class="area timeline">
    <div class="head">
      <div class="group"><button class="ib" aria-label="Auto keying"><svg class="i"><use href="#ring"/></svg></button><button class="ib off" aria-label="Keying options"><svg class="d"><use href="#down"/></svg></button></div>
      <div class="group"><button class="ib" aria-label="First"><svg class="i"><use href="#first"/></svg></button><button class="ib" aria-label="Previous key"><svg class="i"><use href="#prevkey"/></svg></button><button class="ib" aria-label="Play backwards"><svg class="i"><use href="#back"/></svg></button><button class="ib" aria-label="Play"><svg class="i"><use href="#play"/></svg></button><button class="ib" aria-label="Next key"><svg class="i"><use href="#nextkey"/></svg></button><button class="ib" aria-label="Last"><svg class="i"><use href="#last"/></svg></button></div>
      <input class="num" aria-label="Current frame" value="1">
      <div class="group startend"><button class="ib" aria-label="Preview range"><svg class="i"><use href="#clock"/></svg></button><button class="ib st">Start</button></div>
    </div>
    <div class="ruler"><b>1</b><span>50</span><span>100</span><span>150</span><span>200</span><span>250</span><svg viewBox="0 0 10 6"><path d="m1 5 4-4 4 4" class="l"/></svg></div>
  </section>
</div>
</main>

<footer class="status">
  <svg class="i m"><use href="#lmb"/></svg><span>Select</span>
  <svg class="i m"><use href="#rmb"/></svg><span>Backimage Sample</span>
  <span class="stats">Collection | Cube | Verts:20 | Faces:12 | Tris:24 | Objects:1/4 | Memory: 76.1 MiB | VRAM: 0.6/7.9 GiB | 5.0.0 a</span>
</footer>
</body>
</html>
```
FILE: styles.css
```css
* { box-sizing: border-box; }
html, body { height: 100%; }
body {
  margin: 0; display: flex; flex-direction: column; overflow: hidden;
  background: #181818; color: #e2e2e2;
  font: 12px/16px "Inter Display", Inter, "Liberation Sans", sans-serif;
  font-feature-settings: "cv08";
}
button, input, select { font: inherit; font-feature-settings: inherit; color: inherit; margin: 0; padding: 0; border: 0; background: none; border-radius: 0; outline: 0; min-width: 0; white-space: nowrap; }
h1, h2, h3, h4, ul { margin: 0; padding: 0; font: inherit; list-style: none; }
svg { stroke-width: 1.2; }
.sprite { position: absolute; width: 0; height: 0; }
.l { fill: none; stroke: currentColor; }
.i { width: 14px; height: 14px; flex: none; display: block; }
.d { width: 8px; height: 16px; flex: none; display: block; }
.dim { color: #999; }
.hole { fill: #fff; } .pupil { fill: #265787; }

.titlebar { display: flex; align-items: center; height: 23px; flex: none; padding-left: 3px; gap: 7px; color: #fff; }
.logo { color: #ea7600; }
.winctl { margin-left: auto; display: flex; height: 21px; padding-right: 2px; }
.winctl button { width: 46px; display: grid; place-items: center; }
.winctl svg { width: 12px; height: 12px; }

.topbar { display: flex; align-items: center; height: 26px; flex: none; padding: 0 8px 0 3px; }
.menu { height: 20px; padding: 0 7px; color: #e2e2e2; }
.topbar .menu { padding: 0 8px; }
.app .hole { fill: #181818; }
.topbar .app { padding: 0 8px 0 7px; color: #ddd; }
.app .i { width: 16px; height: 16px; }
.topbar .app + .menu { padding-left: 1px; }
.tabs { display: flex; flex: 1; margin-left: 7px; padding-left: 7px; gap: 2px; border-left: 1px solid #303030; height: 20px; }
.tabs button { padding: 0 10px; color: #989898; background: #1d1d1d; border-radius: 4px; }
.tabs .on { background: #303030; color: #fff; }
.tabs .plus { padding: 0 2px; }

.group, .box, .isel, .sel, .search { height: 20px; border: 1px solid #3d3d3d; border-radius: 4px; background: #232323; flex: none; }
.group { display: flex; overflow: hidden; }
.drop { display: flex; align-items: center; justify-content: center; gap: 4px; width: 31px; flex: none; }
.ib { display: grid; place-items: center; width: 20px; background: #545454; border-left: 1px solid #3d3d3d; flex: none; }
.ib:first-child { border-left: 0; }
.ib.blue { background: #4772b3; color: #fff; }
.ib.off { background: #222; color: #444; }
.ib.dark { background: #282828; }
.ib.faint { background: #404040; color: #777; }
.drop.off { color: #555; }
.idsel { background: #1d1d1d; align-items: stretch; }
.idsel .drop { background: #282828; border-right: 1px solid #3d3d3d; }
.idsel input { flex: 1; padding-left: 7px; }
.idsel > .i { align-self: center; margin-right: 5px; }
.scenesel { width: 173px; } .layersel { width: 152px; margin-left: 5px; }
.sel, .isel select {
  appearance: none; padding: 0 14px 0 6px;
  background: #282828 url("data:image/svg+xml,%3Csvg xmlns='http://www.w3.org/2000/svg' width='8' height='8'%3E%3Cpath d='M1 2.500l3 3 3-3' fill='none' stroke='%23ddd' stroke-width='1.200'/%3E%3C/svg%3E") no-repeat right 3px center;
}
.isel { display: flex; align-items: center; padding-left: 4px; background: #282828; }
.isel select { flex: 1; height: 18px; background-color: transparent; }
.search { display: flex; align-items: center; gap: 7px; padding-left: 5px; width: 119px; background: #1d1d1d; }
.search input { flex: 1; }
.search input::placeholder { color: #777; opacity: 1; }
.push { margin-left: auto; }
.pushi { margin-left: auto; }

.work { flex: 1; display: flex; gap: 5px; min-height: 0; padding: 0 2px 0 3px; }
.left { flex: 1; display: flex; flex-direction: column; gap: 5px; min-width: 0; }
.upper { flex: 423 1 0; display: flex; gap: 4px; min-height: 0; }
.area { border: 1px solid #3d3d3d; border-radius: 6px; overflow: hidden; position: relative; display: flex; flex-direction: column; min-width: 0; min-height: 0; background: #303030; }
.head { display: flex; align-items: center; gap: 7px; height: 25px; flex: none; padding: 0 8px 0 7px; position: relative; }
.menus { display: flex; }

.sheet, .view { flex: 1 1 0; }
.sheet .head { gap: 5px; padding-right: 6px; }
.sheetbody { flex: 1; display: flex; min-height: 0; }
.side { width: 157px; flex: none; background: #2a2a2a; border-left: 3px solid #363636; overflow: hidden; }
.sechead { display: flex; align-items: center; gap: 4px; height: 24px; padding: 0 8px 0 5px; background: #303030; }
.tall { height: 33px; }
.tall .i + .i { margin-left: 2px; } .tall span { margin-left: 5px; }
.side .pushi { margin-left: auto; }
.pad { padding: 4px 8px 3px 4px; }
.pad .sel { display: block; width: 100%; }
.geo.pad { padding: 8px 9px 6px 4px; }
.pick { display: flex; align-items: center; gap: 9px; width: 100%; height: 18px; padding-left: 21px; border-radius: 3px; }
.on.pick, .on.dom { background: #4772b3; color: #fff; }
.domains { padding: 7px 9px 0 4px; }
.dom { display: flex; align-items: center; gap: 9px; width: 100%; height: 18px; margin: 2px 0 4px; border-radius: 3px; color: #d8d8d8; }
.root { gap: 2px; padding-left: 4px; }
.root .i + .i { margin-right: 8px; }
.kids { position: relative; }
.kids::before { content: ""; position: absolute; left: 12px; top: -2px; bottom: -2px; width: 1px; background: #5a5a5a; }
.kids .dom { padding: 0 4px 0 35px; }
.dom em { margin-left: auto; font-style: normal; color: #8a8a8a; }
.dom.on em { color: #a3b8d8; }
.kids .dom:last-child em { margin-left: -8px; }
.gone { color: #6a6a6a; padding-left: 21px; }
.grid { flex: 1; position: relative; overflow: hidden;
  background:
    linear-gradient(#303030, #303030) 0 0 / 100% 21px no-repeat,
    linear-gradient(#1d1d1d, #1d1d1d) 28px 0 / 1px 100% no-repeat,
    linear-gradient(#1d1d1d, #1d1d1d) 218px 0 / 1px 100% no-repeat,
    linear-gradient(#ffffff0a, #ffffff0a) 0 0 / 28px 100% no-repeat,
    repeating-linear-gradient(#282828 0 20px, #2b2b2b 20px 40px) 0 22px;
}
table { border-collapse: collapse; table-layout: fixed; width: 219px; font-family: Inter, "Liberation Sans", sans-serif; }
thead { font-family: "Inter Display", Inter, sans-serif; }
thead th { height: 22px; border-bottom: 1px solid #1d1d1d; border-right: 1px solid #1d1d1d; text-align: center; padding: 0 4px 0 0; }
tr > *:first-child { width: 29px; }
th { font-weight: 400; }
tbody tr { height: 20px; }
tbody th { text-align: right; padding: 0 3px 0 0; color: #ccc; }
td { text-align: right; padding: 0 4px 0 0; color: #ccc; }
td:nth-child(2) { padding-right: 2px; }
.foot { height: 25px; display: flex; align-items: center; justify-content: flex-end; gap: 10px; padding: 2px 8px 0 0; color: #e6e6e6; font-family: Inter, "Liberation Sans", sans-serif; }
.foot i { width: 1px; height: 12px; background: #ccc; }
.flap { position: absolute; right: 0; top: 22px; width: 9px; height: 18px; background: #1e1e1e88; border-radius: 4px 0 0 4px; color: #aaa; display: grid; place-items: center; }
.flap svg { width: 8px; height: 16px; }
.flap.start { left: 0; right: auto; border-radius: 0 4px 4px 0; }

.stage { position: absolute; inset: -1px; width: calc(100% + 2px); height: calc(100% + 2px); stroke-width: 1; }
.axisgizmo text { font-size: 11px; font-weight: 600; text-anchor: middle; fill: #111; }
.glass { background: #303030b0; padding-right: 0; }
.view .group, .view .box, .view .isel { border-color: #333; }
.mode { width: 110px; }
.view .menus { margin-left: -3px; }
.view .menu { padding: 0 8px 0 7px; }
.selnew { margin: 0 12px 0 -4px; }
.orient { width: 77px; }
.glass .group .ib.dark { width: 18px; }
.glass .ib { width: 19px; }
.cut { margin: 0 -5px 0 1px; }
.toolset { display: flex; justify-content: space-between; height: 26px; flex: none; position: relative; }
.ts { display: flex; align-items: center; gap: 5px; padding: 0 9px 0 7px; background: #303030b0; border-radius: 0 0 6px 0; }
.ts.opt { padding: 0 7px; border-radius: 0 0 0 6px; }
.default { width: 99px; margin-right: 4px; }
.drag { width: 80px; margin-left: 4px; }
.options { width: 67px; gap: 7px; background: #282828; }
.viewbody { flex: 1; position: relative; display: flex; min-height: 0; padding: 8px 7px; gap: 18px; }
.tools { display: flex; flex-direction: column; gap: 6px; width: 38px; }
.tools div { display: flex; flex-direction: column; gap: 1px; border-radius: 4px; overflow: hidden; flex: none; }
.tools button { height: 34px; background: #282828; display: grid; place-items: center; }
.tools .on { background: #4772b3; }
.tools svg { width: 32px; height: 32px; }
.info { text-shadow: 1px 1px 1px #000; color: #fff; }
.info div { height: 18px; }
.nav { margin-left: auto; margin-top: 83px; display: flex; flex-direction: column; gap: 2px; }
.nav button { width: 28px; height: 28px; border-radius: 50%; background: #2b2b2b; display: grid; place-items: center; }
.nav svg { width: 18px; height: 18px; }

.nodes { flex: 580 1 0; background: #1d1d1d; }
.nodes .head { height: 23px; gap: 6px; }
.modifier { width: 79px; }
.nodes .menus { margin-left: -1px; }
.treesel { margin-left: 23.7%; width: 195px; }
.nodes .head .push { margin-left: auto; }
.mini .ib { width: 19px; } .mini .dark { width: 18px; }
.crumbs { position: relative; display: flex; align-items: center; height: 20px; margin-top: 13px; padding-left: 18px; gap: 9px; z-index: 1; }
.crumbs .sep { margin: 0 -6px 0 4px; }
.canvas { position: absolute; inset: 0; }
.head, .crumbs { z-index: 1; }
.canvas .flap { top: 46px; }
.wires { position: absolute; inset: 0; width: 100%; height: 100%; stroke-width: 1; }
.node { position: absolute; width: 125px; padding-bottom: 6px; background: #303030; border-radius: 4px; box-shadow: 0 2px 6px #000a, 0 0 0 1px #141414; font-size: 11px; }
.store { width: 243px; }
.node h2 { display: flex; align-items: center; gap: 4px; height: 18px; padding: 0 6px; border-radius: 4px 4px 0 0; margin-bottom: 3px; color: #e6e6e6; white-space: nowrap; }
.node .row { position: relative; height: 20px; line-height: 20px; padding: 0 9px; margin: 0; }
.node .out { text-align: right; }
.black { background: #1b1b1b; } .navy { background: #1d2547; } .green { background: #1d725e; } .red { background: #83314a; } .teal { background: #246283; } .olive { background: #38482a; }
.so { position: absolute; left: -4px; top: 6px; width: 8px; height: 8px; border-radius: 50%; box-shadow: 0 0 0 1px #111; }
.out .so, .so.r { left: auto; right: -4px; }
.so.geo { background: #00d6a3; }
.so.none { background: #232323; border: 1px solid #777; box-shadow: none; }
.so.bool, .so.int, .so.vec { border-radius: 0; width: 7px; height: 7px; transform: rotate(45deg); }
.so.bool { background: #cca6d6; } .so.int { background: #598c5c; } .so.vec { background: #6363c7; }
.so.open::after { content: ""; position: absolute; inset: 2px; background: #222; border-radius: 50%; }
.node > .sel, .node > .isel { display: flex; width: 106px; height: 18px; margin: 0 9px 2px; }
.node .isel select { height: 16px; }
.node > .isel { margin: 6px 9px 4px; }
.dot { width: 8px; height: 8px; margin: 0 2px 0 4px; border-radius: 50%; background: #598c5c; box-shadow: 0 0 0 1px #111; }
.node .idsel { height: 18px; margin: 1px 9px 2px; }
.store { padding-bottom: 3px; }
.val { display: flex; align-items: center; }
.val span { position: absolute; margin-left: 14px; }
.val input { width: 106px; height: 17px; padding-right: 13px; text-align: right; background: #545454; border-radius: 3px; }
.gin, .gout { padding-bottom: 3px; }
.gin h2, .gout h2 { height: 19px; margin-bottom: 2px; }
.cap { padding-bottom: 2px; } .cap h2 { margin-bottom: 5px; }
.equal { padding-bottom: 5px; }
.node.equal > .sel { margin-bottom: 0; }
.split { padding-bottom: 2px; }
.index { padding-bottom: 3px; }
.setpos .row { height: 19px; line-height: 19px; }
.setpos h2 { margin-bottom: 4px; }
.vector { margin: 4px 9px 0; border-radius: 3px; overflow: hidden; display: grid; gap: 1px; }
.vector input { border-radius: 0; height: 16px; }

.right { width: 329px; flex: none; display: flex; flex-direction: column; gap: 5px; min-height: 0; }
.outliner { flex: 286 1 0; background: #282828; }
.outliner .search { margin: 0 auto 0 11px; }
.outliner .head { gap: 6px; } .outliner .drop { width: 32px; }
.tree { flex: 1; position: relative; background: repeating-linear-gradient(#282828 0 20px, #2b2b2b 20px 40px) 0 2px; padding: 2px 2px 0; }
.tree li { display: flex; align-items: center; height: 20px; padding-right: 10px; color: #d4d4d4; }
.tree li > .i { margin-right: 6px; }
.tree .l0 { padding-left: 20px; }
.tree .l1 { padding-left: 20px; } .tree .l2 { padding-left: 40px; } .tree .l3 { padding-left: 60px; }
.tree span { margin-left: 1px; }
.tree .mute { color: #777; } .tree .strong { color: #fff; }
.tree .picked { color: #e9a23b; background: #334d80; box-shadow: inset 0 0 0 1px #5a80c0; height: 18px; margin: 1px 0; border-radius: 2px; }
.picked > .i:first-child, .picked .tg { color: #ddd; }
.halo { background: #ffffff3a; border-radius: 4px; box-shadow: 0 0 0 2px #ffffff3a; }
.tree .ex { display: flex; gap: 6px; margin-left: 24px; }
.ex sub { margin: 2px -4px 0 -8px; font-size: 10px; color: #ddd; line-height: 16px; text-shadow: 0 0 1px #000; }
.tg { display: flex; align-items: center; gap: 6px; margin-left: auto; color: #ddd; }
.faded { color: #555; }
.tree::before, .tree::after { content: ""; position: absolute; width: 1px; left: 28px; top: 86px; height: 50px; background: #4fa0d4; z-index: 1; }
.tree::after { left: 48px; top: 106px; height: 30px; background: #5a5a5a; }
input[type=checkbox] { appearance: none; width: 10px; height: 10px; border: 1px solid #999; margin-right: 2px; flex: none; }
input[type=checkbox]:checked { background: #ddd url("data:image/svg+xml,%3Csvg xmlns='http://www.w3.org/2000/svg' viewBox='0 0 10 10'%3E%3Cpath d='M2 5l2 2 4-4' fill='none' stroke='%23222' stroke-width='1.600'/%3E%3C/svg%3E") center / 10px; border-color: #ddd; border-radius: 1px; }
.c-red { color: #8f4341; } .c-pink { color: #7c4a74; } .c-blue { color: #5ab4ee; } .c-orange { color: #c8844c; } .c-brown { color: #574032; } .c-coral { color: #e55d5a; } .c-purple { color: #9258d8; } .c-steel { color: #3f6d8c; } .c-tan { color: #6f4a30; } .c-amber { color: #8f6238; } .c-wrench { color: #5680d0; }

.props { flex: 666 1 0; }
.props .head { height: 23px; }
.props .search { margin: 0 auto 0 60px; }
.props .drop { width: 32px; } .props .drop.small { width: 20px; }
.propbody { flex: 1; display: flex; min-height: 0; overflow: hidden; }
.ptabs { width: 28px; flex: none; background: #1d1d1d; padding: 9px 0 0 1px; display: flex; flex-direction: column; gap: 10px; color: #bbb; }
.ptabs div { display: flex; flex-direction: column; gap: 2px; }
.ptabs button { height: 26px; display: grid; place-items: center; border-radius: 4px 0 0 4px; }
.ptabs .on { background: #303030; color: #e28c47; }
.i.c-mesh, .ptabs .c-mesh { color: #00b28a; }
.ptabs .c-world { color: #b5535a; } .ptabs .c-mod { color: #5680d0; }
.pcontent { flex: 1; padding: 0 3px 0 7px; min-width: 0; }
.context { display: flex; align-items: center; gap: 9px; height: 38px; padding: 0 2px 0 3px; }
.pcontent > .idsel { margin: 7px 0 10px; }
.panel { background: #3d3d3d; border: 1px solid #464646; border-radius: 4px; height: 25px; margin-bottom: 2px; }
.transform { height: auto; }
.panel h3, .panel h4 { display: flex; align-items: center; gap: 2px; height: 23px; padding: 0 8px 0 5px; color: #e6e6e6; }
.panel h4 { padding-left: 19px; margin-top: 10px; }
.grip { margin-left: auto; width: 12px; height: 6px; background: radial-gradient(circle, #aaa 0 1px, transparent 1px) 0 0 / 3px 3px; opacity: .7; }
.panel input[type=checkbox] { width: 12px; height: 12px; margin-right: 4px; background-color: #41608f; border-color: #41608f; opacity: .8; border-radius: 2px; }
.fields { display: grid; margin-top: 5px; }
.panel h3 + .fields { margin-top: 9px; }
.fields label { display: grid; grid-template-columns: 102px 122px 14px 1fr; align-items: center; height: 20px; padding-left: 10px; }
.fields span { text-align: right; padding-right: 10px; }
.fields input, .fields .sel { height: 19px; background-color: #545454; text-align: center; border: 0; }
.fields .sel { background-color: #282828; text-align: left; border-radius: 3px; }
.fields .i { margin-left: 5px; color: #aaa; }
.fields label > i { width: 4px; height: 4px; margin-left: 15px; border-radius: 50%; background: #ddd; }
.bar { width: 4px; margin: 2px 2px 26px 0; background: #3c3c3c; border-radius: 2px; flex: none; }

.timeline { height: 48px; flex: none; }
.timeline .head { padding: 0 0 0 2px; height: 24px; gap: 6px; }
.timeline .group { border: 0; }
.num { width: 74px; height: 19px; background: #545454; border-radius: 4px; text-align: center; margin: 0 0 0 12px; flex: none; }
.timeline .startend { border-radius: 4px 0 0 4px; flex: 1; }
.ib.st { width: 56px; }
.ruler { flex: 1; display: flex; align-items: center; background: #1d1d1d; position: relative; color: #aaa; font-family: Inter, "Liberation Sans", sans-serif; }
.ruler b { width: 24px; flex: none; height: 18px; line-height: 18px; background: #4772b3; color: #fff; border-radius: 4px; text-align: center; font-weight: 500; margin-right: 16px; }
.ruler span { width: 61px; text-align: center; flex: none; }
.ruler svg { position: absolute; right: 27px; bottom: 0; width: 10px; height: 6px; }

.status { height: 23px; flex: none; display: flex; align-items: center; gap: 3px; padding: 0 10px; color: #a0a0a0; }
.m { width: 12px; height: 16px; }
.status span { margin-right: 10px; }
.status .stats { margin: 0 2px 0 auto; }
```
